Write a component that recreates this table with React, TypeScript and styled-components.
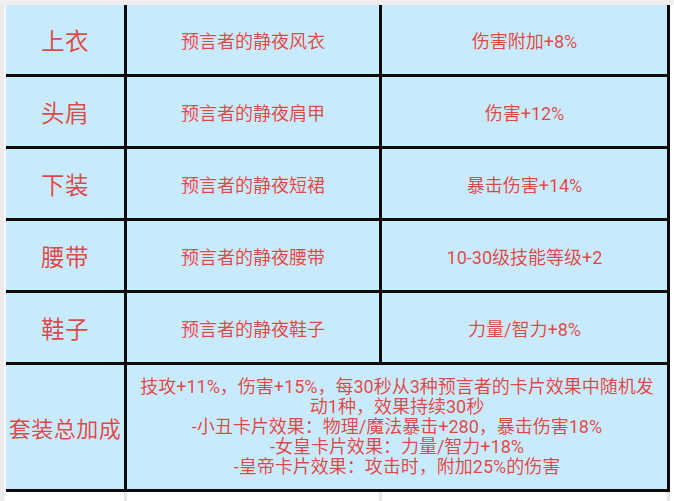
import React from "react";
import styled, { createGlobalStyle } from "styled-components";

const GlobalStyle = createGlobalStyle`
  html, body {
    margin: 0;
    padding: 0;
    background: #ffffff;
  }
  body {
    font-family: Roboto, "Noto Sans CJK SC", sans-serif;
  }
`;

// Layout
const Page = styled.div`
  width: 674px;
  height: 501px;
  display: flex;
  flex-direction: column;
  overflow: hidden;
  background: #ffffff;
`;

const TopStrip = styled.div`
  height: 5px;
  flex: none;
  background: #efeff1;
`;

const Body = styled.div`
  flex: 1;
  display: flex;
`;

const Gutter = styled.div`
  width: 4px;
  flex: none;
  background: #ebebed;
  border-right: 2px solid #f7f7f9;
`;

const Main = styled.div`
  display: flex;
  flex-direction: column;
`;

// Table
const Grid = styled.div`
  display: grid;
  grid-template-columns: 118px 252px 285px;
  grid-template-rows: repeat(5, 69px) 124px;
  gap: 3px;
  padding: 0 3px 3px 0;
  background: #0b0b0b;
  width: 661px;
`;

const Cell = styled.div<{ $span?: number }>`
  background: #c8eafd;
  color: #d64a4c;
  display: flex;
  align-items: center;
  justify-content: center;
  text-align: center;
  text-shadow: 0 0 1px rgba(255, 255, 255, 0.9);
  grid-column: span ${(p) => p.$span || 1};
`;

const SlotName = styled.span<{ $size?: number }>`
  font-size: ${(p) => p.$size || 23.5}px;
  letter-spacing: 0.5px;
  white-space: nowrap;
`;

const ItemText = styled.span`
  font-size: 18px;
  white-space: nowrap;
`;

const BonusText = styled.div`
  font-size: 18px;
  line-height: 20px;
  white-space: nowrap;
`;

// Empty sheet grid below the table
const BelowRow = styled.div`
  display: flex;
  height: 20px;
`;

const BelowCell = styled.div<{ $w: number }>`
  width: ${(p) => p.$w}px;
  border-right: 3px solid #e8e8ea;
`;

interface Piece {
  slot: string;
  item: string;
  effect: string;
}

const pieces: Array<Piece> = [
  { slot: "上衣", item: "预言者的静夜风衣", effect: "伤害附加+8%" },
  { slot: "头肩", item: "预言者的静夜肩甲", effect: "伤害+12%" },
  { slot: "下装", item: "预言者的静夜短裙", effect: "暴击伤害+14%" },
  { slot: "腰带", item: "预言者的静夜腰带", effect: "10-30级技能等级+2" },
  { slot: "鞋子", item: "预言者的静夜鞋子", effect: "力量/智力+8%" },
];

const bonusLines = [
  "技攻+11%，伤害+15%，每30秒从3种预言者的卡片效果中随机发",
  "动1种，效果持续30秒",
  "-小丑卡片效果：物理/魔法暴击+280，暴击伤害18%",
  "-女皇卡片效果：力量/智力+18%",
  "-皇帝卡片效果：攻击时，附加25%的伤害",
];

export default function App() {
  return (
    <Page>
      <GlobalStyle />
      <TopStrip />
      <Body>
        <Gutter />
        <Main>
          <Grid>
            {pieces.map((p) => (
              <React.Fragment key={p.slot}>
                <Cell>
                  <SlotName>{p.slot}</SlotName>
                </Cell>
                <Cell>
                  <ItemText>{p.item}</ItemText>
                </Cell>
                <Cell>
                  <ItemText>{p.effect}</ItemText>
                </Cell>
              </React.Fragment>
            ))}
            <Cell>
              <SlotName $size={22}>套装总加成</SlotName>
            </Cell>
            <Cell $span={2}>
              <BonusText>
                {bonusLines.map((line, i) => (
                  <div key={i}>{line}</div>
                ))}
              </BonusText>
            </Cell>
          </Grid>
          <BelowRow>
            <BelowCell $w={118} />
            <BelowCell $w={252} />
            <BelowCell $w={285} />
          </BelowRow>
        </Main>
      </Body>
    </Page>
  );
}
